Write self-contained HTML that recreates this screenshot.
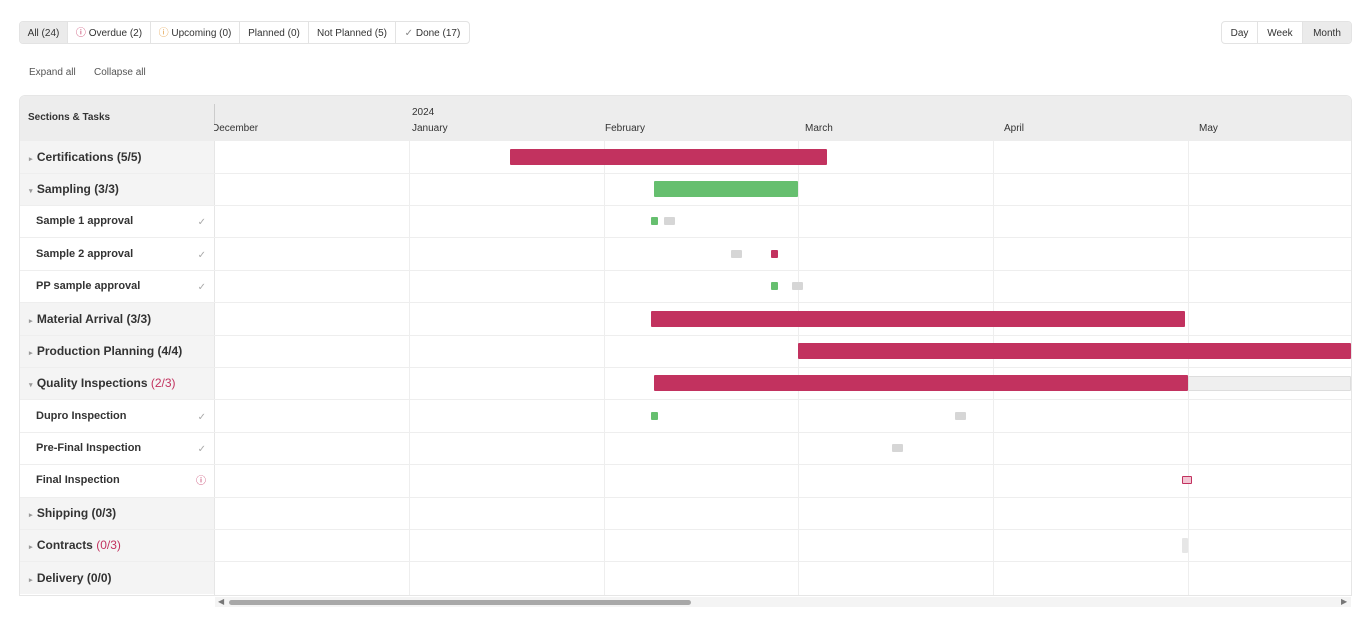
<!DOCTYPE html><html><head><style>
*{box-sizing:border-box;margin:0;padding:0}
body{width:1366px;height:623px;background:#fff;font-family:"Liberation Sans",sans-serif;position:relative;overflow:hidden;color:#333}
.a{position:absolute}
.seg{position:absolute;top:21px;left:19px;height:23px;display:flex;border:1px solid #e3e3e3;border-radius:4px;font-size:10px;overflow:hidden}
.seg div{padding:0;text-align:center;line-height:23px;border-right:1px solid #e3e3e3;white-space:nowrap}
.seg div:last-child{border-right:none}
.hl{height:1px;background:#eee;left:20px;width:1331px}
.vl{width:1px;background:#eee;top:141px;height:454px}
.r{left:20px;width:194px;height:32px;font-size:12px;font-weight:bold;line-height:32px;padding-left:9px;background:#f4f4f4}
.r.t{background:#fff;font-size:11px;padding-left:16px;line-height:33px}
.b{position:absolute;height:16px;background:#c2325f;border-radius:1px}
.s{position:absolute;width:7px;height:8px;border-radius:1px}
.g{background:#d6d6d6;width:11px}
.ck{position:absolute;right:8px;top:1px;color:#aaa;font-weight:normal;font-size:10px}
.ar{font-size:7px;color:#999;margin-right:1px}
</style></head><body>
<div class="seg"><div style="background:#ebebeb;width:48px">All (24)</div><div style="width:83px"><span style="color:#c2325f">ⓘ</span> Overdue (2)</div><div style="width:89px"><span style="color:#e3a04a">ⓘ</span> Upcoming (0)</div><div style="width:69px">Planned (0)</div><div style="width:87px">Not Planned (5)</div><div style="width:73px"><span style="color:#888">✓</span> Done (17)</div></div>
<div class="seg" style="left:1221px"><div style="width:36px">Day</div><div style="width:45px">Week</div><div style="background:#ebebeb;width:48px">Month</div></div>
<div class="a" style="left:29px;top:67px;font-size:10px;color:#555">Expand all</div>
<div class="a" style="left:94px;top:67px;font-size:10px;color:#555">Collapse all</div>
<div class="a" style="left:19px;top:95px;width:1333px;height:501px;border:1px solid #e6e6e6;border-radius:6px 6px 0 0"></div>
<div class="a" style="left:20px;top:96px;width:1331px;height:45px;background:#ededed;border-radius:5px 5px 0 0"></div>
<div class="a" style="left:214px;top:104px;width:1px;height:20px;background:#ccc"></div>
<div class="a" style="left:28px;top:112px;font-size:10px;font-weight:bold">Sections &amp; Tasks</div>
<div class="a" style="left:412px;top:107px;font-size:10px">2024</div>
<div class="a" style="left:214px;top:123px;font-size:10px;width:60px;overflow:hidden;white-space:nowrap;text-indent:-2px">December</div>
<div class="a" style="left:412px;top:123px;font-size:10px">January</div>
<div class="a" style="left:605px;top:123px;font-size:10px">February</div>
<div class="a" style="left:805px;top:123px;font-size:10px">March</div>
<div class="a" style="left:1004px;top:123px;font-size:10px">April</div>
<div class="a" style="left:1199px;top:123px;font-size:10px">May</div>
<div class="a vl" style="left:409px"></div><div class="a vl" style="left:604px"></div><div class="a vl" style="left:798px"></div><div class="a vl" style="left:993px"></div><div class="a vl" style="left:1188px"></div>
<div class="a" style="left:214px;top:141px;width:1px;height:454px;background:#e6e6e6"></div>
<div class="a r" style="top:141px"><span class="ar">▸</span> Certifications (5/5)</div>
<div class="a r" style="top:173px"><span class="ar">▾</span> Sampling (3/3)</div>
<div class="a r t" style="top:205px">Sample 1 approval<span class="ck">✓</span></div>
<div class="a r t" style="top:238px">Sample 2 approval<span class="ck">✓</span></div>
<div class="a r t" style="top:270px">PP sample approval<span class="ck">✓</span></div>
<div class="a r" style="top:303px"><span class="ar">▸</span> Material Arrival (3/3)</div>
<div class="a r" style="top:335px"><span class="ar">▸</span> Production Planning (4/4)</div>
<div class="a r" style="top:367px"><span class="ar">▾</span> Quality Inspections <span style="color:#c2325f;font-weight:normal">(2/3)</span></div>
<div class="a r t" style="top:400px">Dupro Inspection<span class="ck">✓</span></div>
<div class="a r t" style="top:432px">Pre-Final Inspection<span class="ck">✓</span></div>
<div class="a r t" style="top:464px">Final Inspection<span class="ck" style="color:#c2325f">ⓘ</span></div>
<div class="a r" style="top:497px"><span class="ar">▸</span> Shipping (0/3)</div>
<div class="a r" style="top:529px"><span class="ar">▸</span> Contracts <span style="color:#c2325f;font-weight:normal">(0/3)</span></div>
<div class="a r" style="top:562px"><span class="ar">▸</span> Delivery (0/0)</div>
<div class="a hl" style="top:173px"></div><div class="a hl" style="top:205px"></div><div class="a hl" style="top:237px"></div><div class="a hl" style="top:270px"></div><div class="a hl" style="top:302px"></div><div class="a hl" style="top:335px"></div><div class="a hl" style="top:367px"></div><div class="a hl" style="top:399px"></div><div class="a hl" style="top:432px"></div><div class="a hl" style="top:464px"></div><div class="a hl" style="top:497px"></div><div class="a hl" style="top:529px"></div><div class="a hl" style="top:561px"></div>
<div class="b" style="left:510px;width:317px;top:149px"></div>
<div class="b" style="left:654px;width:144px;top:181px;background:#66bf6f"></div>
<div class="s" style="left:651px;top:217px;background:#66bf6f"></div><div class="s g" style="left:664px;top:217px"></div>
<div class="s g" style="left:731px;top:250px"></div><div class="s" style="left:771px;top:250px;background:#c2325f"></div>
<div class="s" style="left:771px;top:282px;background:#66bf6f"></div><div class="s g" style="left:792px;top:282px"></div>
<div class="b" style="left:651px;width:534px;top:311px"></div>
<div class="b" style="left:798px;width:553px;top:343px"></div>
<div class="b" style="left:1188px;width:163px;top:376px;height:15px;background:#efefef;border:1px solid #ddd"></div>
<div class="b" style="left:654px;width:534px;top:375px"></div>
<div class="s" style="left:651px;top:412px;background:#66bf6f"></div><div class="s g" style="left:955px;top:412px"></div>
<div class="s g" style="left:892px;top:444px"></div>
<div class="s" style="left:1182px;top:476px;width:10px;background:#f3c6d4;border:1px solid #c2325f"></div>
<div class="s" style="left:1182px;top:538px;width:6px;height:15px;background:#e6e6e6"></div>
<div class="a" style="left:215px;top:597px;width:1136px;height:10px;background:#f4f4f4"></div>
<div class="a" style="left:229px;top:600px;width:462px;height:5px;background:#a8a8a8;border-radius:3px"></div>
<div class="a" style="left:218px;top:597px;font-size:8px;color:#777">◀</div>
<div class="a" style="left:1341px;top:597px;font-size:8px;color:#777">▶</div>
</body></html>
